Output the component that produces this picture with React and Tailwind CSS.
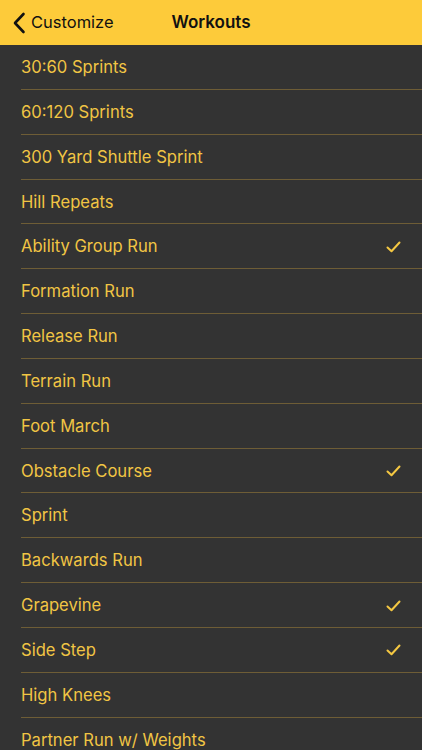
import React from 'react';

const workouts = [
  { name: '30:60 Sprints' },
  { name: '60:120 Sprints' },
  { name: '300 Yard Shuttle Sprint' },
  { name: 'Hill Repeats' },
  { name: 'Ability Group Run', checked: true },
  { name: 'Formation Run' },
  { name: 'Release Run' },
  { name: 'Terrain Run' },
  { name: 'Foot March' },
  { name: 'Obstacle Course', checked: true },
  { name: 'Sprint' },
  { name: 'Backwards Run' },
  { name: 'Grapevine', checked: true },
  { name: 'Side Step', checked: true },
  { name: 'High Knees' },
  { name: 'Partner Run w/ Weights' },
  { name: 'Partner Carry' }
];

const Check = () => (
  <svg width="15" height="12" viewBox="0 0 15 12" fill="none">
    <path d="M1.5 6.5 L5.5 10.2 L13.5 1.5" stroke="#f5c842" strokeWidth="2" strokeLinecap="round" strokeLinejoin="round" />
  </svg>
);

const App = () => {
  return (
    <div className="w-[422px] h-[750px] overflow-hidden bg-[#333333]" style={{ fontFamily: 'Inter, "Noto Sans", sans-serif' }}>
      <div className="h-[45px] bg-[#fdcb3a] relative flex items-center justify-center">
        <div className="absolute left-[12px] top-0 h-full flex items-center gap-[5px] text-[#111] text-[16.5px]">
          <svg width="14" height="22" viewBox="0 0 14 22" fill="none">
            <path d="M11.5 2 L3 11 L11.5 20" stroke="#111" strokeWidth="2.6" strokeLinecap="round" strokeLinejoin="round" />
          </svg>
          <span>Customize</span>
        </div>
        <span className="text-[17px] font-semibold text-[#111]">Workouts</span>
      </div>
      <div>
        {workouts.map((w) => (
          <div key={w.name} className="pl-[21px]">
            <div className="h-[44.85px] pt-[1px] flex items-center justify-between pr-[21px] border-b border-[#6e5d36]">
              <span className="text-[16.6px] text-[#f1c544]">{w.name}</span>
              {w.checked && <Check />}
            </div>
          </div>
        ))}
      </div>
    </div>
  );
};

export default App;
